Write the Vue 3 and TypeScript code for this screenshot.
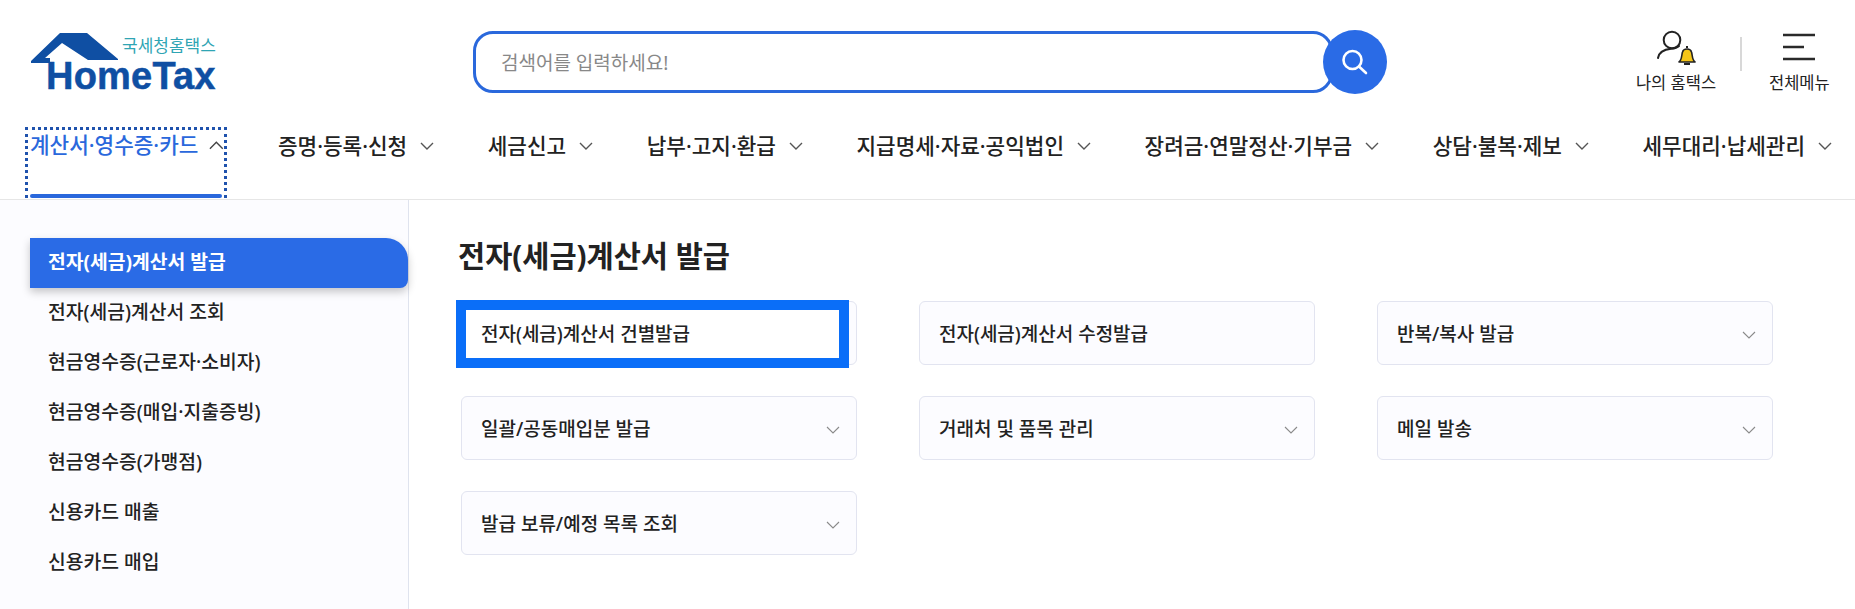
<script setup lang="ts">
const nav = ['증명·등록·신청', '세금신고', '납부·고지·환급', '지급명세·자료·공익법인', '장려금·연말정산·기부금', '상담·불복·제보', '세무대리·납세관리']
const side = ['전자(세금)계산서 조회', '현금영수증(근로자·소비자)', '현금영수증(매입·지출증빙)', '현금영수증(가맹점)', '신용카드 매출', '신용카드 매입']
const cards = [
  { t: '전자(세금)계산서 건별발급', c: false, f: true },
  { t: '전자(세금)계산서 수정발급', c: false, f: false },
  { t: '반복/복사 발급', c: true, f: false },
  { t: '일괄/공동매입분 발급', c: true, f: false },
  { t: '거래처 및 품목 관리', c: true, f: false },
  { t: '메일 발송', c: true, f: false },
  { t: '발급 보류/예정 목록 조회', c: true, f: false },
]
</script>

<template>
  <div class="page">
    <header class="top">
      <div class="logo">
        <svg class="roof" width="98" height="40" viewBox="0 0 98 40">
          <path d="M31 2 H58 L89 28 V29 H59 L33 12 L16 27 H21 V32 H2 V30 Z" fill="#0f4fa3" />
        </svg>
        <span class="sub">국세청홈택스</span>
        <span class="brand">HomeTax</span>
      </div>
      <div class="search">
        <div class="box"><span>검색어를 입력하세요!</span></div>
        <div class="go">
          <svg width="36" height="36" viewBox="0 0 36 36" fill="none" stroke="#fff" stroke-width="2.6">
            <circle cx="15.500" cy="16" r="9" />
            <path d="M22 22.500 L29 29" stroke-linecap="round" />
          </svg>
        </div>
      </div>
      <div class="tools">
        <div class="tool t1">
          <svg width="44" height="42" viewBox="0 0 44 42" fill="none">
            <circle cx="18" cy="14" r="8.300" stroke="#222" stroke-width="2" />
            <path d="M4 32 C5 26 10 23.500 17 22.800 C20 22.500 23 22 25 20" stroke="#222" stroke-width="2" stroke-linecap="round" />
            <path d="M25 36 C28 34 27.500 29 28.500 26 C29.500 22 36.500 22 37.500 26 C38.500 29 38 34 41 36 Z" fill="#f5c518" stroke="#222" stroke-width="1.600" stroke-linejoin="round" />
            <path d="M33 20 V22 M30 38 H36" stroke="#222" stroke-width="2" />
          </svg>
          <span>나의 홈택스</span>
        </div>
        <i class="sep"></i>
        <div class="tool t2">
          <svg width="32" height="42" viewBox="0 0 32 42" stroke="#2a2a2a" stroke-width="2.600">
            <path d="M0 9 H32 M0 21 H21 M0 33 H32" />
          </svg>
          <span>전체메뉴</span>
        </div>
      </div>
    </header>
    <nav class="nav">
      <div class="nav-first">
        <span>계산서·영수증·카드</span>
        <svg width="16" height="14" viewBox="0 0 16 14" fill="none" stroke="#444" stroke-width="1.500"><path d="M1 11 L8 4 L15 11" /></svg>
      </div>
      <div v-for="n in nav" :key="n" class="nav-item">
        <span>{{ n }}</span>
        <svg width="14" height="14" viewBox="0 0 14 14" fill="none" stroke="#555" stroke-width="1.400"><path d="M1 4 L7 10 L13 4" /></svg>
      </div>
    </nav>
    <main class="body">
      <aside class="side">
        <div class="active"><span>전자(세금)계산서 발급</span></div>
        <div v-for="s in side" :key="s" class="side-item"><span>{{ s }}</span></div>
      </aside>
      <section class="content">
        <h2>전자(세금)계산서 발급</h2>
        <div class="grid">
          <div v-for="c in cards" :key="c.t" class="card">
            <i v-if="c.f" class="focus"></i>
            <span class="label">{{ c.t }}</span>
            <svg v-if="c.c" class="chev" width="16" height="16" viewBox="0 0 16 16" fill="none" stroke="#8a8a8a" stroke-width="1.100"><path d="M2 5 L8 11 L14 5" /></svg>
          </div>
        </div>
      </section>
    </main>
  </div>
</template>

<style scoped>
.page { width: 1855px; height: 609px; overflow: hidden; background: #fff; font-family: "Noto Sans", "Noto Sans CJK KR", sans-serif; color: #222; }
.top { height: 108px; display: flex; position: relative; }
.logo { width: 473px; position: relative; flex: none; }
.roof { position: absolute; left: 29px; top: 31px; }
.sub { position: absolute; left: 122px; top: 36px; font-size: 17px; line-height: 20px; color: #2fa5b4; }
.brand { position: absolute; left: 46px; top: 61px; font: bold 38px/30px "Liberation Sans", sans-serif; color: #0f4fa3; -webkit-text-stroke: 0.5px #0f4fa3; letter-spacing: 0.2px; }
.search { display: flex; align-items: center; height: 64px; margin-top: 30px; }
.box { width: 860px; height: 62px; box-sizing: border-box; border: 3px solid #2a68dc; border-radius: 20px; padding-left: 25px; display: flex; align-items: center; font-size: 19px; color: #888; }
.go { width: 64px; height: 64px; flex: none; border-radius: 50%; background: #2a6be6; margin-left: -10px; display: flex; align-items: center; justify-content: center; }
.tools { position: absolute; left: 1636px; top: 26px; display: flex; align-items: flex-start; }
.tool { display: flex; flex-direction: column; align-items: center; font-size: 16.500px; color: #222; }
.tool span { margin-top: 4px; line-height: 22px; white-space: nowrap; }
.t1 { width: 80px; }
.sep { width: 2px; height: 34px; background: #d8d8d8; margin: 11px 27px 0 24px; }
.nav { height: 92px; display: flex; align-items: flex-start; border-bottom: 1px solid #e6e6e6; padding-left: 25px; box-sizing: border-box; }
.nav-first { width: 202px; height: 71px; flex: none; box-sizing: border-box; border: 3px dotted #1f52ad; border-bottom: none; display: flex; gap: 11px; padding-left: 2px; font-size: 21.300px; font-weight: 500; color: #2a68dc; line-height: 30px; margin-top: 19px; margin-right: 51px; position: relative; white-space: nowrap; }
.nav-first::after { content: ""; position: absolute; left: 2px; right: 2px; bottom: 0; height: 4px; background: #2a68dc; border-radius: 2px; }
.nav-first svg { margin-top: 8px; }
.nav-item { display: flex; gap: 13px; font-size: 21.300px; font-weight: 500; line-height: 30px; margin-top: 23px; margin-right: 53.600px; height: 30px; align-items: center; white-space: nowrap; flex: none; }
.body { display: flex; height: 409px; }
.side { width: 409px; flex: none; box-sizing: border-box; border-right: 1px solid #dfe3ee; padding: 38px 0 0 30px; background: #fcfcff; }
.active { width: 378px; height: 50px; box-sizing: border-box; background: #2a6be6; color: #fff; font-size: 19.300px; font-weight: 700; display: flex; align-items: center; padding: 0 0 5px 18px; border-radius: 0 22px 8px 0; box-shadow: 0 4px 8px rgba(0,0,0,.22); }
.side-item { height: 50px; box-sizing: border-box; display: flex; align-items: center; padding: 0 0 5px 18px; font-size: 19.300px; font-weight: 500; }
.content { padding: 0 0 0 49px; flex: 1; }
h2 { margin: 36px 0 0; font-size: 29.500px; line-height: 40px; font-weight: 700; color: #222; }
.grid { display: grid; grid-template-columns: 396px 396px 396px; column-gap: 62px; row-gap: 31px; margin-top: 25px; margin-left: 3px; }
.card { position: relative; height: 64px; box-sizing: border-box; border: 1px solid #e2e4f0; border-radius: 6px; background: #fcfcff; display: flex; align-items: center; justify-content: space-between; padding: 0 15px 0 19px; font-size: 19px; font-weight: 500; }
.chev { margin-top: 3px; }
.label { position: relative; }
.focus { position: absolute; left: -6px; top: -2px; width: 393px; height: 68px; box-sizing: border-box; border: 10px solid #0a6ef8; background: #fff; }
</style>
